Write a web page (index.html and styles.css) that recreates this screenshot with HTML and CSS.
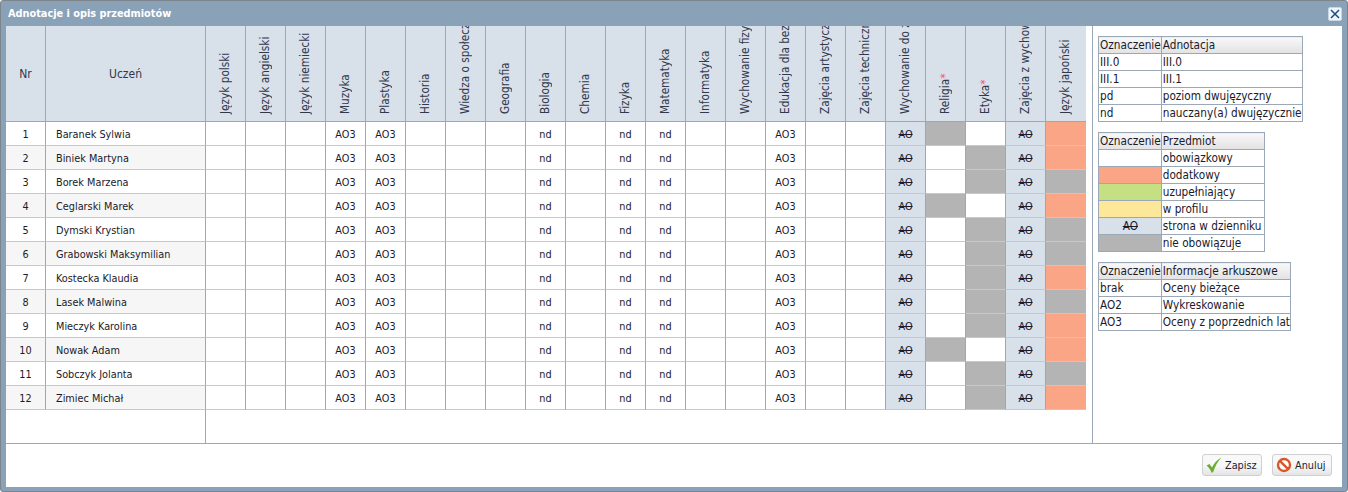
FILE: index.html
```html
<!DOCTYPE html>
<html lang="pl">
<head>
<meta charset="utf-8">
<title>Adnotacje i opis przedmiotów</title>
<link rel="stylesheet" href="styles.css">
</head>
<body>
<div class="dialog">
  <div class="titlebar">
    <span class="title">Adnotacje i opis przedmiotów</span>
    <button class="close" aria-label="Zamknij"><svg width="10" height="10" viewBox="0 0 10 10"><path d="M1 1L9 9M9 1L1 9" stroke="#1c4a80" stroke-width="1.5" fill="none"/></svg></button>
  </div>
  <div class="content">
    <div class="main">
      <div class="grid-pane">
        <table class="grid">
          <thead>
            <tr>
              <th class="c-nr">Nr</th>
              <th class="c-name">Uczeń</th>
              <th><div class="rot">Język polski</div></th>
              <th><div class="rot">Język angielski</div></th>
              <th><div class="rot">Język niemiecki</div></th>
              <th><div class="rot">Muzyka</div></th>
              <th><div class="rot">Plastyka</div></th>
              <th><div class="rot">Historia</div></th>
              <th><div class="rot">Wiedza o społeczeństwie</div></th>
              <th><div class="rot">Geografia</div></th>
              <th><div class="rot">Biologia</div></th>
              <th><div class="rot">Chemia</div></th>
              <th><div class="rot">Fizyka</div></th>
              <th><div class="rot">Matematyka</div></th>
              <th><div class="rot">Informatyka</div></th>
              <th><div class="rot">Wychowanie fizyczne</div></th>
              <th><div class="rot">Edukacja dla bezpieczeństwa</div></th>
              <th><div class="rot">Zajęcia artystyczne</div></th>
              <th><div class="rot">Zajęcia techniczne</div></th>
              <th><div class="rot">Wychowanie do życia</div></th>
              <th><div class="rot">Religia<span class="req">*</span></div></th>
              <th><div class="rot">Etyka<span class="req">*</span></div></th>
              <th><div class="rot">Zajęcia z wychowawcą</div></th>
              <th><div class="rot">Język japoński</div></th>
            </tr>
          </thead>
          <tbody>
            <tr><td>1</td><td class="name">Baranek Sylwia</td><td></td><td></td><td></td><td>AO3</td><td>AO3</td><td></td><td></td><td></td><td>nd</td><td></td><td>nd</td><td>nd</td><td></td><td></td><td>AO3</td><td></td><td></td><td class="page"><s>AO</s></td><td class="na"></td><td></td><td class="page"><s>AO</s></td><td class="extra"></td></tr>
            <tr><td>2</td><td class="name">Biniek Martyna</td><td></td><td></td><td></td><td>AO3</td><td>AO3</td><td></td><td></td><td></td><td>nd</td><td></td><td>nd</td><td>nd</td><td></td><td></td><td>AO3</td><td></td><td></td><td class="page"><s>AO</s></td><td></td><td class="na"></td><td class="page"><s>AO</s></td><td class="extra"></td></tr>
            <tr><td>3</td><td class="name">Borek Marzena</td><td></td><td></td><td></td><td>AO3</td><td>AO3</td><td></td><td></td><td></td><td>nd</td><td></td><td>nd</td><td>nd</td><td></td><td></td><td>AO3</td><td></td><td></td><td class="page"><s>AO</s></td><td></td><td class="na"></td><td class="page"><s>AO</s></td><td class="na"></td></tr>
            <tr><td>4</td><td class="name">Ceglarski Marek</td><td></td><td></td><td></td><td>AO3</td><td>AO3</td><td></td><td></td><td></td><td>nd</td><td></td><td>nd</td><td>nd</td><td></td><td></td><td>AO3</td><td></td><td></td><td class="page"><s>AO</s></td><td class="na"></td><td></td><td class="page"><s>AO</s></td><td class="extra"></td></tr>
            <tr><td>5</td><td class="name">Dymski Krystian</td><td></td><td></td><td></td><td>AO3</td><td>AO3</td><td></td><td></td><td></td><td>nd</td><td></td><td>nd</td><td>nd</td><td></td><td></td><td>AO3</td><td></td><td></td><td class="page"><s>AO</s></td><td></td><td class="na"></td><td class="page"><s>AO</s></td><td class="na"></td></tr>
            <tr><td>6</td><td class="name">Grabowski Maksymilian</td><td></td><td></td><td></td><td>AO3</td><td>AO3</td><td></td><td></td><td></td><td>nd</td><td></td><td>nd</td><td>nd</td><td></td><td></td><td>AO3</td><td></td><td></td><td class="page"><s>AO</s></td><td></td><td class="na"></td><td class="page"><s>AO</s></td><td class="na"></td></tr>
            <tr><td>7</td><td class="name">Kostecka Klaudia</td><td></td><td></td><td></td><td>AO3</td><td>AO3</td><td></td><td></td><td></td><td>nd</td><td></td><td>nd</td><td>nd</td><td></td><td></td><td>AO3</td><td></td><td></td><td class="page"><s>AO</s></td><td></td><td class="na"></td><td class="page"><s>AO</s></td><td class="extra"></td></tr>
            <tr><td>8</td><td class="name">Lasek Malwina</td><td></td><td></td><td></td><td>AO3</td><td>AO3</td><td></td><td></td><td></td><td>nd</td><td></td><td>nd</td><td>nd</td><td></td><td></td><td>AO3</td><td></td><td></td><td class="page"><s>AO</s></td><td></td><td class="na"></td><td class="page"><s>AO</s></td><td class="na"></td></tr>
            <tr><td>9</td><td class="name">Mieczyk Karolina</td><td></td><td></td><td></td><td>AO3</td><td>AO3</td><td></td><td></td><td></td><td>nd</td><td></td><td>nd</td><td>nd</td><td></td><td></td><td>AO3</td><td></td><td></td><td class="page"><s>AO</s></td><td></td><td class="na"></td><td class="page"><s>AO</s></td><td class="extra"></td></tr>
            <tr><td>10</td><td class="name">Nowak Adam</td><td></td><td></td><td></td><td>AO3</td><td>AO3</td><td></td><td></td><td></td><td>nd</td><td></td><td>nd</td><td>nd</td><td></td><td></td><td>AO3</td><td></td><td></td><td class="page"><s>AO</s></td><td class="na"></td><td></td><td class="page"><s>AO</s></td><td class="extra"></td></tr>
            <tr><td>11</td><td class="name">Sobczyk Jolanta</td><td></td><td></td><td></td><td>AO3</td><td>AO3</td><td></td><td></td><td></td><td>nd</td><td></td><td>nd</td><td>nd</td><td></td><td></td><td>AO3</td><td></td><td></td><td class="page"><s>AO</s></td><td></td><td class="na"></td><td class="page"><s>AO</s></td><td class="na"></td></tr>
            <tr><td>12</td><td class="name">Zimiec Michał</td><td></td><td></td><td></td><td>AO3</td><td>AO3</td><td></td><td></td><td></td><td>nd</td><td></td><td>nd</td><td>nd</td><td></td><td></td><td>AO3</td><td></td><td></td><td class="page"><s>AO</s></td><td></td><td class="na"></td><td class="page"><s>AO</s></td><td class="extra"></td></tr>
          </tbody>
        </table>
        <div class="filler"></div>
      </div>
      <div class="legend-pane">
        <table class="legend legend-a">
          <tr><th class="lc">Oznaczenie</th><th>Adnotacja</th></tr>
          <tr><td>III.0</td><td>III.0</td></tr>
          <tr><td>III.1</td><td>III.1</td></tr>
          <tr><td>pd</td><td>poziom dwujęzyczny</td></tr>
          <tr><td>nd</td><td>nauczany(a) dwujęzycznie</td></tr>
        </table>
        <table class="legend legend-b">
          <tr><th class="lc">Oznaczenie</th><th>Przedmiot</th></tr>
          <tr><td></td><td>obowiązkowy</td></tr>
          <tr><td class="extra"></td><td>dodatkowy</td></tr>
          <tr><td class="suppl"></td><td>uzupełniający</td></tr>
          <tr><td class="profile"></td><td>w profilu</td></tr>
          <tr><td class="page center"><s>AO</s></td><td>strona w dzienniku</td></tr>
          <tr><td class="na"></td><td>nie obowiązuje</td></tr>
        </table>
        <table class="legend legend-c">
          <tr><th class="lc">Oznaczenie</th><th>Informacje arkuszowe</th></tr>
          <tr><td>brak</td><td>Oceny bieżące</td></tr>
          <tr><td>AO2</td><td>Wykreskowanie</td></tr>
          <tr><td>AO3</td><td>Oceny z poprzednich lat</td></tr>
        </table>
      </div>
    </div>
    <div class="footer">
      <button class="btn"><svg width="16" height="16" viewBox="0 0 16 16"><path d="M0.500 8.500L3.500 7L6 10.500C8 6.500 11 2.800 15.500 0.500C11.500 4.800 9 9.500 7 15.500L5.500 15.500C4.500 12.800 2.800 10.500 0.500 8.500Z" fill="#6cae35"/></svg><span>Zapisz</span></button>
      <button class="btn"><svg width="16" height="16" viewBox="0 0 16 16"><circle cx="8" cy="8" r="6" fill="#fff" stroke="#d8572a" stroke-width="2.4"/><path d="M3.800 3.800L12.200 12.200" stroke="#d8572a" stroke-width="2.400"/></svg><span>Anuluj</span></button>
    </div>
  </div>
</div>
</body>
</html>
```
FILE: styles.css
```css
html, body {
  margin: 0;
  padding: 0;
  background: #fff;
}
body {
  font-family: "DejaVu Sans Condensed", "DejaVu Sans", sans-serif;
  font-stretch: condensed;
  color: #1a1a2a;
}
.dialog {
  width: 1348px;
  height: 492px;
  box-sizing: border-box;
  display: flex;
  flex-direction: column;
  background: #8aa2b8;
  border: 1px solid #7d848c;
  border-radius: 3px;
  padding: 0 5px 4px 5px;
}
.titlebar {
  height: 25px;
  flex: none;
  display: flex;
  align-items: center;
  justify-content: space-between;
  padding-left: 2px;
}
.title {
  color: #fff;
  font-weight: bold;
  font-size: 10.85px;
}
.close {
  width: 14px;
  height: 14px;
  padding: 0;
  border: 1px solid #c8d6e4;
  border-radius: 2px;
  background: #f0f5fb;
  display: flex;
  align-items: center;
  justify-content: center;
}
.content {
  flex: 1;
  display: flex;
  flex-direction: column;
  background: #fff;
  min-height: 0;
}
.main {
  height: 418px;
  box-sizing: border-box;
  flex: none;
  display: flex;
  border-bottom: 1px solid #9aa8b8;
}
.grid-pane {
  width: 1080px;
  flex: none;
  display: flex;
  flex-direction: column;
}
.grid {
  border-collapse: separate;
  border-spacing: 0;
  table-layout: fixed;
  width: 1080px;
  font-size: 10.8px;
}
.grid th, .grid td {
  width: 40px;
  box-sizing: border-box;
  border-right: 1px solid #9aa8b8;
  padding: 0;
  text-align: center;
}
.grid th:last-child, .grid td:last-child {
  border-right: 0;
}
.grid th {
  height: 96px;
  background: #d8e0ea;
  border-bottom: 1px solid #9aa8b8;
  font-weight: normal;
  font-size: 12px;
  color: #30384a;
}
.grid th.c-name {
  width: 160px;
}
.grid td {
  height: 24px;
  padding-top: 2px;
  border-bottom: 1px solid #c8c8c8;
}
.grid tbody tr:nth-child(even) td:nth-child(-n+2) {
  background: #f6f6f6;
}
.grid td.name {
  text-align: left;
  padding-left: 10px;
}
.rot {
  height: 95px;
  width: 39px;
  overflow: hidden;
  box-sizing: border-box;
  writing-mode: vertical-rl;
  transform: rotate(180deg);
  white-space: nowrap;
  text-align: left;
  line-height: 39px;
  padding-top: 7px;
  font-size: 11.7px;
}
.req {
  color: #f0506a;
  font-size: 12px;
}
.grid .page, .legend .page {
  background: #d8e0ea;
}
.grid .na, .legend .na {
  background: #b4b4b4;
}
.grid .extra, .legend .extra {
  background: #faa585;
}
.legend .suppl {
  background: #c4e082;
}
.legend .profile {
  background: #fde89a;
}
.filler {
  flex: 1;
  width: 200px;
  box-sizing: border-box;
  border-right: 1px solid #9aa8b8;
}
.legend-pane {
  flex: 1;
  margin-left: 6px;
  border-left: 1px solid #9aa8b8;
  padding: 10px 0 0 5px;
}
.legend {
  border-collapse: collapse;
  font-size: 11.7px;
  margin-bottom: 10px;
  color: #1a1a2a;
}
.legend th, .legend td {
  border: 1px solid #9aa8b8;
  padding: 0 0 0 1px;
  height: 16px;
  line-height: 16px;
  white-space: nowrap;
  text-align: left;
  font-weight: normal;
}
.legend-b td:last-child, .legend-b th:last-child {
  padding-right: 3px;
}
.legend th {
  background: linear-gradient(#f8f8f8, #e2e2e2);
}
.legend .lc {
  width: 59px;
}
.legend .center {
  text-align: center;
}
.footer {
  flex: 1;
  display: flex;
  justify-content: flex-end;
  align-items: flex-start;
  gap: 10px;
  padding: 10px 10px 0 0;
}
.btn {
  width: 60px;
  height: 22px;
  display: flex;
  align-items: center;
  gap: 3px;
  padding: 0 0 0 3px;
  border: 1px solid #d0d0d0;
  border-radius: 3px;
  background: linear-gradient(#f8f8f8 50%, #e4e4e4);
  font-family: inherit;
  font-stretch: condensed;
  font-size: 10.8px;
  color: #223;
}
```
